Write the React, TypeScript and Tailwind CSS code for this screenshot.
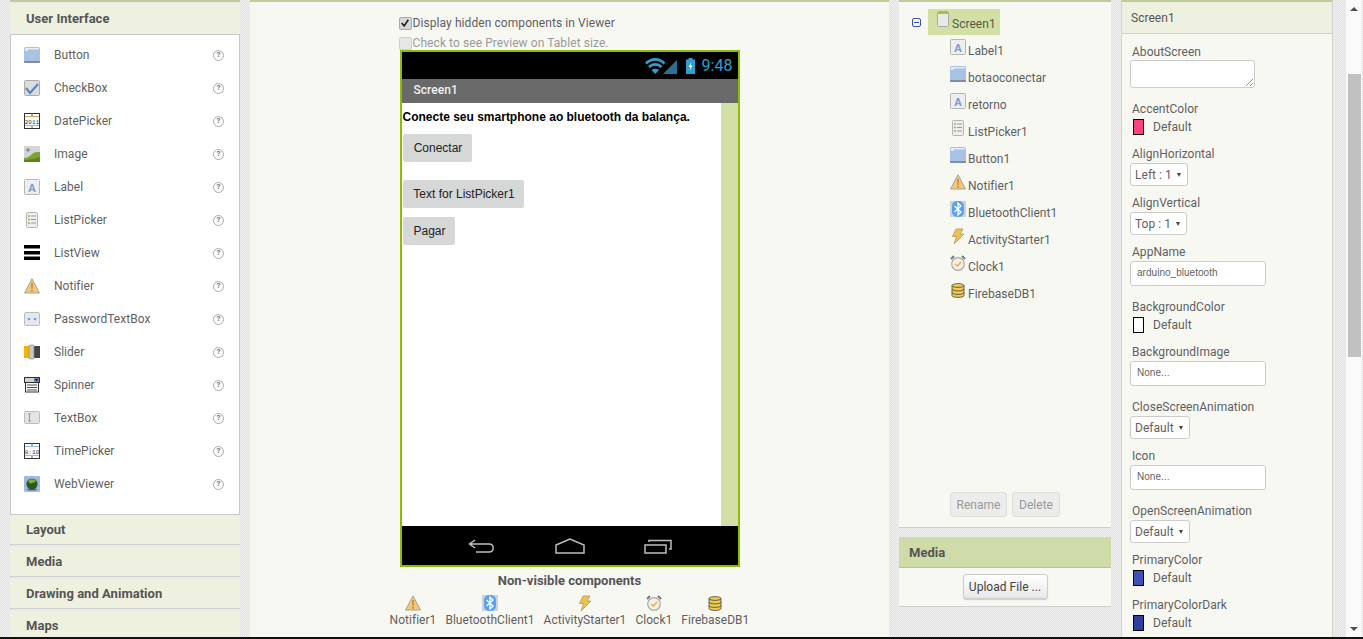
import React from 'react';

type IconName =
  | 'button' | 'checkbox' | 'datepicker' | 'image' | 'label' | 'listpicker' | 'listview' | 'notifier'
  | 'password' | 'slider' | 'spinner' | 'textbox' | 'timepicker' | 'webviewer' | 'bluetooth'
  | 'activity' | 'clock' | 'firebase' | 'screen';

const Glyph: React.FC<{ name: IconName; className?: string }> = ({ name, className = 'w-4 h-4' }) => {
  const body = () => {
    switch (name) {
      case 'button':
        return (
          <>
            <rect x="0" y="0" width="16" height="16" rx="1.5" fill="#a9c2e4" />
            <path d="M0 14h16v1a1 1 0 0 1-1 1H1a1 1 0 0 1-1-1z" fill="#7f8ea8" />
            <path d="M1 1h14v1.5H4.5L3 4H1z" fill="#e4ecf6" />
          </>
        );
      case 'checkbox':
        return (
          <>
            <rect x=".5" y=".5" width="15" height="15" rx="1" fill="#dcdcdc" stroke="#aaa" />
            <path d="M2 8l4 5 8-9" fill="none" stroke="#5b86c4" strokeWidth="2.2" />
          </>
        );
      case 'datepicker':
        return (
          <>
            <rect x=".5" y=".5" width="15" height="15" fill="#fff" stroke="#333" />
            <path d="M1 3.5h14M1 12.5h14" stroke="#d9a860" strokeWidth="1" />
            <path d="M8 1L6.8 2.6h2.4zM8 15l-1.2-1.6h2.4z" fill="#555" />
            <text x="8" y="10.500" fontSize="6" fontFamily="Liberation Mono" textAnchor="middle" fill="#333">2011</text>
          </>
        );
      case 'image':
        return (
          <>
            <rect x="0" y="0" width="16" height="16" rx="1" fill="#d4d4d4" />
            <circle cx="4" cy="4" r="1.8" fill="#8c8c8c" />
            <path d="M0 12c4 0 6-2 8-4s5-2 8-2v10H0z" fill="#7ea32b" />
            <path d="M0 14c5 0 10-1 16-3v5H0z" fill="#5d8417" />
          </>
        );
      case 'label':
        return (
          <>
            <rect x=".5" y=".5" width="15" height="15" rx="1" fill="#eeeeee" stroke="#b5b5b5" />
            <text x="8" y="12.5" fontSize="11" fontWeight="700" fontFamily="Liberation Sans" textAnchor="middle" fill="#7c9bd0">A</text>
          </>
        );
      case 'listpicker':
        return (
          <>
            <rect x="2.5" y=".5" width="11" height="15" rx="1" fill="#eeeeee" stroke="#b5b5b5" />
            <path d="M4 4h2M4 7.5h2M4 11h2" stroke="#9ab83c" strokeWidth="1.4" />
            <path d="M7 4h5M7 7.5h5M7 11h5" stroke="#999" strokeWidth="1.2" />
          </>
        );
      case 'listview':
        return (
          <>
            <rect x="0" y="0" width="16" height="3.5" fill="#000" />
            <rect x="0" y="6" width="16" height="3.5" fill="#000" />
            <rect x="0" y="11.5" width="16" height="3.5" fill="#000" />
          </>
        );
      case 'notifier':
        return (
          <>
            <path d="M8 .8L15.5 15H.5z" fill="#f3c77b" stroke="#a5a29a" />
            <path d="M7.2 5h1.6l-.3 6h-1z" fill="#c9782c" />
            <rect x="7.2" y="12" width="1.6" height="1.6" fill="#c9782c" />
          </>
        );
      case 'password':
        return (
          <>
            <rect x=".5" y="1.5" width="15" height="13" rx="1" fill="#e4e8ef" stroke="#bcbcbc" />
            <circle cx="5" cy="8" r="1.300" fill="#7c9bd0" />
            <circle cx="11" cy="8" r="1.300" fill="#7c9bd0" />
          </>
        );
      case 'slider':
        return (
          <>
            <rect x="0" y="2" width="5" height="12" fill="#f2b600" />
            <rect x="9" y="2" width="7" height="12" fill="#444" />
            <rect x="5" y="1" width="5" height="14" rx="1" fill="#c5c5c5" stroke="#888" strokeWidth=".6" />
          </>
        );
      case 'spinner':
        return (
          <>
            <rect x=".5" y=".5" width="15" height="5" fill="#d2d2d2" stroke="#333" />
            <rect x="10" y="1" width="5" height="4" fill="#6b84b8" />
            <path d="M11 2h3l-1.5 2z" fill="#000" />
            <rect x="1.5" y="5.5" width="13" height="9.5" fill="#fff" stroke="#333" />
            <path d="M3 8h10M3 10.5h10M3 13h10" stroke="#333" strokeWidth=".9" />
          </>
        );
      case 'textbox':
        return (
          <>
            <rect x=".5" y="1.5" width="15" height="12" rx="1" fill="#e4e4e4" stroke="#bcbcbc" />
            <path d="M4 4h3M4 11h3M5.5 4v7" stroke="#8a97c0" strokeWidth="1" />
          </>
        );
      case 'timepicker':
        return (
          <>
            <rect x=".5" y=".5" width="15" height="15" fill="#fff" stroke="#333" />
            <path d="M1 3.5h14M1 12.5h14" stroke="#9db8d8" strokeWidth="1" />
            <path d="M8 1L6.8 2.6h2.4zM8 15l-1.2-1.6h2.4z" fill="#555" />
            <text x="8" y="10.500" fontSize="6" fontFamily="Liberation Mono" textAnchor="middle" fill="#333">8:10</text>
          </>
        );
      case 'webviewer':
        return (
          <>
            <rect x="0" y="0" width="16" height="16" rx="1" fill="#9dbbe2" />
            <circle cx="8" cy="8" r="5.6" fill="#2e5a22" />
            <path d="M4 5c2-2.500 6-2.500 8 0-1 2-3 1-4 2s-3 0-4-2z" fill="#76b82f" />
            <ellipse cx="8" cy="13.500" rx="5" ry="1" fill="#333" opacity=".6" />
          </>
        );
      case 'bluetooth':
        return (
          <>
            <rect x="0" y="0" width="16" height="16" fill="#d2d2d2" />
            <rect x="2" y="0" width="12" height="16" rx="5" fill="#56a2f5" />
            <path d="M4.500 5l6.500 6-3 3V2l3 3-6.500 6" fill="none" stroke="#fff" strokeWidth="1.300" />
          </>
        );
      case 'activity':
        return (
          <path d="M6 1h7L10 6h4L4 16l2.500-7.500H2.500z" fill="#f0c14b" stroke="#a99b73" strokeWidth=".8" />
        );
      case 'clock':
        return (
          <>
            <path d="M1 4l3-3M15 4l-3-3" stroke="#777" strokeWidth="2" />
            <circle cx="8" cy="9" r="6.300" fill="#f4f1e4" stroke="#a8a8a8" strokeWidth="1.200" />
            <path d="M5 9l2.500 2L11 7" fill="none" stroke="#eba94b" strokeWidth="1.300" />
          </>
        );
      case 'firebase':
        return (
          <>
            <path d="M2 3.500C2 1 14 1 14 3.500v10c0 2.500-12 2.500-12 0z" fill="#f0cb4d" stroke="#444" strokeWidth=".8" />
            <path d="M2 3.500c0 2.500 12 2.500 12 0M2 7c0 2.500 12 2.500 12 0M2 10.500c0 2.500 12 2.500 12 0" fill="none" stroke="#444" strokeWidth=".8" />
          </>
        );
      case 'screen':
        return (
          <>
            <rect x="2.500" y=".5" width="11" height="15" rx="1" fill="#e9e9e4" stroke="#aaa" />
            <rect x="3" y="1" width="10" height="2" fill="#a6c13d" />
          </>
        );
    }
  };
  return (
    <svg viewBox="0 0 16 16" className={`shrink-0 ${className}`}>
      {body()}
    </svg>
  );
};

const palette: { label: string; icon: IconName }[] = [
  { label: 'Button', icon: 'button' },
  { label: 'CheckBox', icon: 'checkbox' },
  { label: 'DatePicker', icon: 'datepicker' },
  { label: 'Image', icon: 'image' },
  { label: 'Label', icon: 'label' },
  { label: 'ListPicker', icon: 'listpicker' },
  { label: 'ListView', icon: 'listview' },
  { label: 'Notifier', icon: 'notifier' },
  { label: 'PasswordTextBox', icon: 'password' },
  { label: 'Slider', icon: 'slider' },
  { label: 'Spinner', icon: 'spinner' },
  { label: 'TextBox', icon: 'textbox' },
  { label: 'TimePicker', icon: 'timepicker' },
  { label: 'WebViewer', icon: 'webviewer' },
];

const tree: { label: string; icon: IconName }[] = [
  { label: 'Label1', icon: 'label' },
  { label: 'botaoconectar', icon: 'button' },
  { label: 'retorno', icon: 'label' },
  { label: 'ListPicker1', icon: 'listpicker' },
  { label: 'Button1', icon: 'button' },
  { label: 'Notifier1', icon: 'notifier' },
  { label: 'BluetoothClient1', icon: 'bluetooth' },
  { label: 'ActivityStarter1', icon: 'activity' },
  { label: 'Clock1', icon: 'clock' },
  { label: 'FirebaseDB1', icon: 'firebase' },
];

const nonVisible: { label: string; icon: IconName }[] = [
  { label: 'Notifier1', icon: 'notifier' },
  { label: 'BluetoothClient1', icon: 'bluetooth' },
  { label: 'ActivityStarter1', icon: 'activity' },
  { label: 'Clock1', icon: 'clock' },
  { label: 'FirebaseDB1', icon: 'firebase' },
];

const Drawer: React.FC<{ title: string }> = ({ title }) => (
  <div className="h-[30px] mb-[2px] px-[16px] flex items-center bg-[#eef1e0] border-b border-[#d0d0d0] text-[13px] font-bold text-[#555]">
    {title}
  </div>
);

const Swatch: React.FC<{ label: string; color: string }> = ({ label, color }) => (
  <div className="h-[45px]">
    <div className="h-[14px] leading-[14px] pl-[2px]">{label}</div>
    <div className="mt-[3px] flex items-center h-[16px] pl-[3px]">
      <span className={`w-[11px] h-[16px] border border-black ${color}`} />
      <span className="ml-[9px]">Default</span>
    </div>
  </div>
);

const Select: React.FC<{ label: string; value: string; width: string }> = ({ label, value, width }) => (
  <div className="h-[49px]">
    <div className="h-[14px] leading-[14px] pl-[2px]">{label}</div>
    <div className={`mt-[2px] h-[23px] ${width} flex items-center justify-between pl-[4px] pr-[6px] bg-white border border-[#ccc] rounded-[3px]`}>
      <span>{value}</span>
      <span className="w-0 h-0 border-x-[2.5px] border-x-transparent border-t-[4px] border-t-[#444]" />
    </div>
  </div>
);

const TextProp: React.FC<{ label: string; value: string }> = ({ label, value }) => (
  <div className="h-[55px]">
    <div className="h-[14px] leading-[14px] pl-[2px]">{label}</div>
    <div className="mt-[2px] h-[25px] w-[136px] flex items-center px-[6px] pb-[2px] bg-white border border-[#ccc] rounded-[3px] text-[10px] font-['Liberation_Sans',sans-serif]">
      {value}
    </div>
  </div>
);

const PhoneButton: React.FC<{ label: string; className: string }> = ({ label, className }) => (
  <div className={`h-[28px] pl-[2px] flex items-center justify-center bg-[#d6d7d7] rounded-[2px] text-[#222] ${className}`}>{label}</div>
);

export default function App() {
  return (
    <div className="relative w-[1363px] h-[639px] overflow-hidden flex flex-col font-['Roboto',sans-serif] text-[12px] tracking-[0.03px] text-[#5f5f5f] bg-[#ececec] bg-[repeating-conic-gradient(#e2e2e2_0_25%,#f0f0f0_0_50%)] bg-[length:2px_2px]">
      <div className="flex-1 min-h-0 flex pl-[10px] gap-[10px]">
        {/* palette */}
        <div className="w-[230px] overflow-hidden">
          <div className="h-[2px] bg-[#bfcc9c]" />
          <div className="h-[32px] mt-px px-[16px] flex items-center bg-[#eef1e0] border-b border-[#c8c8c8] text-[13px] font-bold text-[#555]">
            User Interface
          </div>
          <div className="h-[480px] pt-[3px] bg-white border-x border-b border-[#c8c8c8]">
            {palette.map(p => (
              <div key={p.label} className="h-[33px] flex items-center pl-[13px] pr-[15px]">
                <Glyph name={p.icon} />
                <span className="ml-[14px] flex-1">{p.label}</span>
                <span className="w-[11px] h-[11px] mt-[1px] rounded-full border border-[#aaa] flex items-center justify-center text-[8px] font-bold leading-none text-[#777]">
                  ?
                </span>
              </div>
            ))}
          </div>
          <Drawer title="Layout" />
          <Drawer title="Media" />
          <Drawer title="Drawing and Animation" />
          <Drawer title="Maps" />
        </div>

        {/* viewer */}
        <div className="w-[639px] bg-[#f8f8f3] border-t-2 border-[#bfcc9c] flex flex-col items-center">
          <div className="w-[340px] h-[48px] relative">
            <div className="flex items-center h-[14px] mt-[14px] ml-[-1px] gap-px tracking-[0.08px]">
              <span className="w-[13px] h-[13px] rounded-[2px] bg-[#d8d8d8] border border-[#aaa] flex items-center justify-center">
                <svg viewBox="0 0 12 12" className="w-[10px] h-[10px]"><path d="M2 6l3 3.500L10 2" fill="none" stroke="#222" strokeWidth="2" /></svg>
              </span>
              <span>Display hidden components in Viewer</span>
            </div>
            <div className="flex items-center h-[14px] mt-[6px] ml-[-1px] gap-px tracking-[0.08px] text-[#9a9a9a]">
              <span className="w-[13px] h-[13px] rounded-[2px] bg-[#e6e6e6] border border-[#d0d0d0]" />
              <span>Check to see Preview on Tablet size.</span>
            </div>
          </div>
          <div className="w-[340px] h-[517px] border-2 border-[#8fbc00] flex flex-col">
            <div className="h-[27px] bg-black flex items-center justify-end pr-[5px]">
              <svg viewBox="0 0 34 18" className="w-[34px] h-[18px] mr-[6px]">
                <path d="M1 6.500c5.500-5.500 13-5.500 18.500 0M4 10c3.500-3.500 9-3.500 12.500 0" fill="none" stroke="#2f9fd0" strokeWidth="2.600" />
                <path d="M10.200 17L6.500 13c2.200-1.800 5.300-1.800 7.500 0z" fill="#2f9fd0" />
                <path d="M18 17l14-14v14z" fill="#2c6f8e" />
              </svg>
              <svg viewBox="0 0 11 16" className="w-[11px] h-[16px] mr-[6px]">
                <path d="M3.500 0h4v1.500H10V16H1V1.500h2.500z" fill="#2f9fd0" />
                <path d="M6.500 4L3.500 9h2l-1 4 3-5.500h-2z" fill="#fff" />
              </svg>
              <span className="text-[16px] leading-none text-[#2f9fd0]">9:48</span>
            </div>
            <div className="h-[24px] bg-[#696969] flex items-center pl-[12px] pb-[2px] font-medium text-[#f0f0f0]">Screen1</div>
            <div className="h-[423px] flex font-['Liberation_Sans',sans-serif] tracking-normal">
              <div className="flex-1 bg-white pl-[1px]">
                <div className="h-[14px] mt-[7px] leading-[14px] font-bold text-black">Conecte seu smartphone ao bluetooth da balança.</div>
                <PhoneButton label="Conectar" className="w-[69px] mt-[10px]" />
                <PhoneButton label="Text for ListPicker1" className="w-[121px] mt-[18px]" />
                <PhoneButton label="Pagar" className="w-[52px] mt-[9px]" />
              </div>
              <div className="w-[17px] bg-[#d2dfa5]" />
            </div>
            <div className="flex-1 bg-black flex items-center justify-center gap-[59px]">
              <svg viewBox="0 0 28 16" className="w-[28px] h-[16px]">
                <path d="M7 2L1.500 6 7 10M2 6h19c5.500 0 5.500 8 0 8H8" fill="none" stroke="#bdbdbd" strokeWidth="1.500" />
              </svg>
              <svg viewBox="0 0 30 16" className="w-[30px] h-[16px]">
                <path d="M15 1L1 7v8h28V7z" fill="none" stroke="#bdbdbd" strokeWidth="1.500" />
              </svg>
              <svg viewBox="0 0 28 16" className="w-[28px] h-[16px]">
                <path d="M1 7h21v8H1zM5 4V2.500h22V11h-2" fill="none" stroke="#bdbdbd" strokeWidth="1.500" />
              </svg>
            </div>
          </div>
          <div className="h-[14px] leading-[14px] mt-[7px] text-[13px] font-bold text-[#555]">Non-visible components</div>
          <div className="flex gap-[9px] mt-[7px]">
            {nonVisible.map(n => (
              <div key={n.label} className="flex flex-col items-center">
                <Glyph name={n.icon} />
                <span className="leading-[14px] mt-[2px]">{n.label}</span>
              </div>
            ))}
          </div>
        </div>

        {/* components */}
        <div className="w-[212px] flex flex-col">
          <div className="h-[527px] bg-[#f8f8f3] border-t-2 border-[#bfcc9c] shadow-[0_1px_0_#cfcfcf] flex flex-col">
            <div className="flex items-center h-[26px] mt-[7px] pl-[13px]">
              <span className="w-[9px] h-[9px] rounded-[2px] border border-[#3a4fb0] flex items-center justify-center">
                <span className="w-[5px] h-px bg-[#3a4fb0]" />
              </span>
              <div className="ml-[7px] h-[26px] w-[72px] bg-[#d2dfa5] flex items-center pl-[7px]">
                <Glyph name="screen" className="w-[16px] h-[16px] -mt-[6px]" />
                <span className="ml-px pt-[4px] text-[#55594a]">Screen1</span>
              </div>
            </div>
            <div className="mt-[3px] pl-[51px]">
              {tree.map(t => (
                <div key={t.label} className="h-[27px] flex">
                  <Glyph name={t.icon} className="w-4 h-4 mt-[1px]" />
                  <span className="ml-[2px] mt-[6px] leading-[14px]">{t.label}</span>
                </div>
              ))}
            </div>
            <div className="mt-auto mb-[10px] flex justify-center gap-[5px]">
              <div className="h-[25px] w-[57px] flex items-center justify-center rounded-[3px] border border-[#ddd] bg-[#ececec] text-[#999]">Rename</div>
              <div className="h-[25px] w-[48px] flex items-center justify-center rounded-[3px] border border-[#ddd] bg-[#ececec] text-[#999]">Delete</div>
            </div>
          </div>
          <div className="mt-[10px] h-[69px] bg-[#f8f8f3] shadow-[0_1px_0_#cfcfcf]">
            <div className="h-[31px] pt-[2px] flex items-center pl-[10px] bg-[#cfdba8] border-b border-[#bdbdb0] text-[13px] font-bold text-[#555]">Media</div>
            <div className="flex justify-center mt-[6px]">
              <div className="h-[25px] w-[85px] flex items-center justify-center rounded-[3px] border border-[#ccc] bg-gradient-to-b from-white to-[#e8e8e8] shadow-[0_1px_1px_#ccc] text-[#444]">Upload File ...</div>
            </div>
          </div>
        </div>

        {/* properties */}
        <div className="w-[212px] overflow-hidden bg-[#f8f8f3] border-t-2 border-x border-t-[#bfcc9c] border-x-[#d4d4d4]">
          <div className="h-[32px] px-[9px] pt-px flex items-center bg-[#eef1e0] border-b border-[#d0d0d0] text-[#555]">Screen1</div>
          <div className="pt-[11px] pl-[8px]">
            <div className="h-[57px]">
              <div className="h-[14px] leading-[14px] pl-[2px]">AboutScreen</div>
              <div className="relative mt-[1px] h-[28px] w-[125px] bg-white border border-[#ccc] rounded-[3px]">
                <svg viewBox="0 0 8 8" className="absolute right-px bottom-px w-2 h-2">
                  <path d="M1 8l7-7M5 8l3-3" stroke="#777" strokeWidth=".8" />
                </svg>
              </div>
            </div>
            <Swatch label="AccentColor" color="bg-[#ff4081]" />
            <Select label="AlignHorizontal" value="Left : 1" width="w-[58px]" />
            <Select label="AlignVertical" value="Top : 1" width="w-[57px]" />
            <TextProp label="AppName" value="arduino_bluetooth" />
            <Swatch label="BackgroundColor" color="bg-white" />
            <TextProp label="BackgroundImage" value="None..." />
            <Select label="CloseScreenAnimation" value="Default" width="w-[60px]" />
            <TextProp label="Icon" value="None..." />
            <Select label="OpenScreenAnimation" value="Default" width="w-[60px]" />
            <Swatch label="PrimaryColor" color="bg-[#3f51b5]" />
            <Swatch label="PrimaryColorDark" color="bg-[#303f9f]" />
          </div>
        </div>

        {/* page scrollbar */}
        <div className="w-[16px] ml-[3px] bg-[#fafafa] flex flex-col items-center">
          <span className="mt-[7px] w-0 h-0 border-x-[4px] border-x-transparent border-b-[4px] border-b-[#505050]" />
          <div className="mt-[63px] w-[13px] h-[283px] bg-[#c1c1c1]" />
          <span className="mt-auto mb-[6px] w-0 h-0 border-x-[4px] border-x-transparent border-t-[4px] border-t-[#505050]" />
        </div>
      </div>
      <div className="h-[2px] bg-[#111]" />
    </div>
  );
}
